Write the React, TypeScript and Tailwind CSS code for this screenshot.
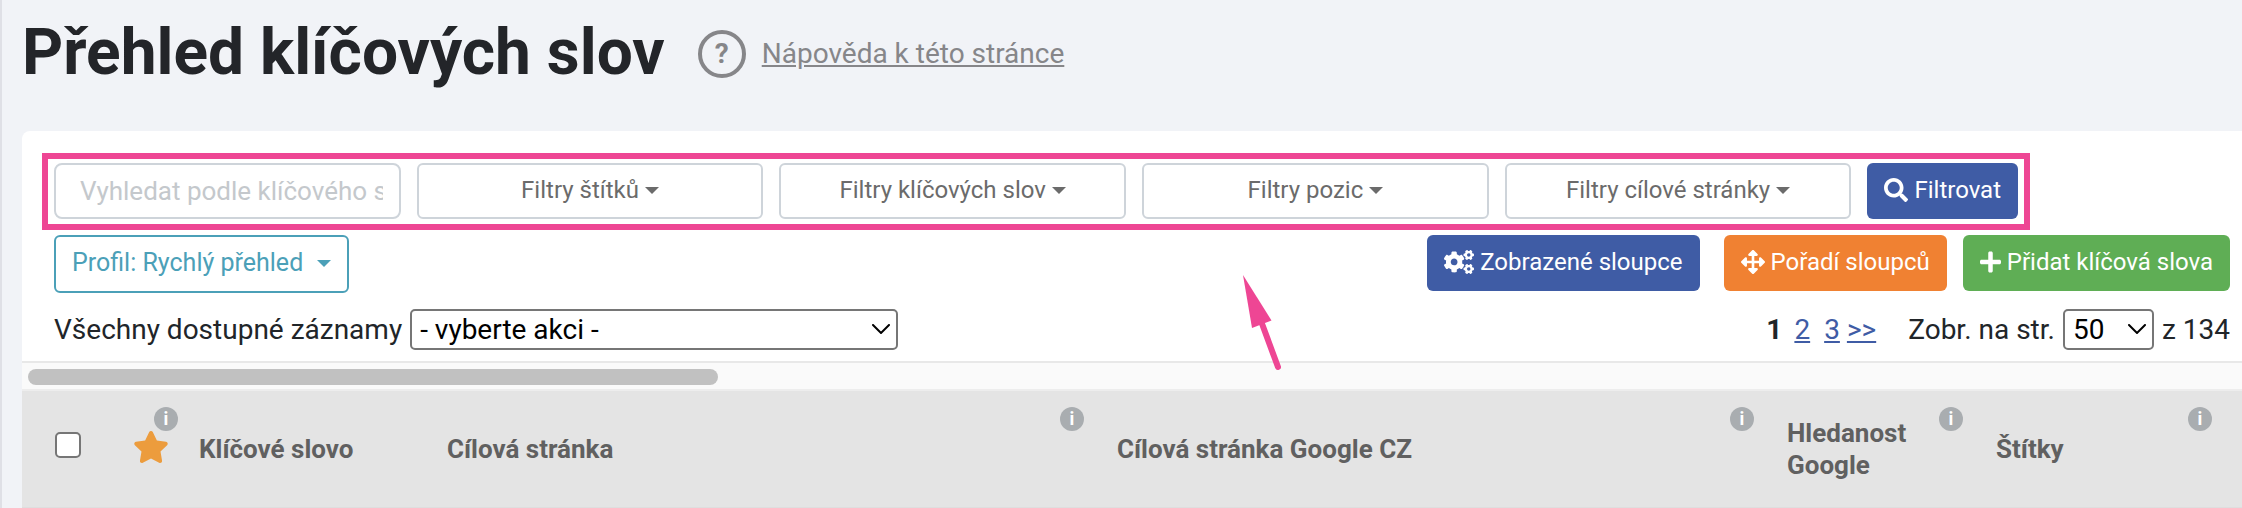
import { useState } from "react";
import { FaArrowsAlt, FaCogs, FaPlus, FaSearch, FaStar } from "react-icons/fa";

const filters = ["Filtry štítků", "Filtry klíčových slov", "Filtry pozic", "Filtry cílové stránky"];

type Column = {
  label: string;
  width: string;
  info: boolean;
};

const columns: Column[] = [
  { label: "Klíčové slovo", width: "w-[248px]", info: false },
  { label: "Cílová stránka", width: "w-[670px]", info: true },
  { label: "Cílová stránka Google CZ", width: "w-[670px]", info: true },
  { label: "Hledanost Google", width: "w-[209px]", info: true },
  { label: "Štítky", width: "w-[249px]", info: true },
];

function Caret() {
  return <span className="border-x-[7px] border-t-[7px] border-x-transparent border-t-current" />;
}

function InfoBadge() {
  return (
    <span className="absolute top-4 right-4 flex size-6 items-center justify-center rounded-full bg-[#a9adb0] text-[18px] leading-none font-bold text-white">
      i
    </span>
  );
}

type SelectProps = {
  label: string;
  value: string;
  options: string[];
  onChange: (value: string) => void;
  className: string;
};

function Select({ label, value, options, onChange, className }: SelectProps) {
  return (
    <span className={`relative inline-block ${className}`}>
      <select
        aria-label={label}
        value={value}
        onChange={(e) => onChange(e.target.value)}
        className="block h-[41px] w-full appearance-none rounded-[5px] border-2 border-[#767676] bg-white pr-8 pl-2 text-[28px] leading-[36px] text-black"
      >
        {options.map((option) => (
          <option key={option}>{option}</option>
        ))}
      </select>
      <svg
        viewBox="0 0 18 10"
        className="pointer-events-none absolute top-[15px] right-2 h-[10px] w-[18px]"
        fill="none"
        stroke="black"
        strokeWidth="2"
        strokeLinecap="round"
      >
        <path d="M1 1l8 8 8-8" />
      </svg>
    </span>
  );
}

export default function App() {
  const [query, setQuery] = useState("");
  const [action, setAction] = useState("- vyberte akci -");
  const [pageSize, setPageSize] = useState("50");

  return (
    <div className="min-h-screen overflow-hidden border-l-2 border-[#dfe0e6] bg-[#f1f3f7] pl-5 font-[Roboto,sans-serif] text-[#212529]">
      <header className="flex h-[131px] items-start gap-[33px] pt-[15px]">
        <h1 className="text-[64px] leading-[76px] font-bold text-[#232529]">Přehled klíčových slov</h1>
        <div className="flex items-center gap-4 pt-[15px] text-[28px] text-[#868689]">
          <span className="flex size-12 items-center justify-center rounded-full border-4 border-[#868689] leading-none font-bold">
            ?
          </span>
          <a href="#napoveda" className="underline">
            Nápověda k této stránce
          </a>
        </div>
      </header>

      <main className="relative rounded-tl-lg bg-white">
        <div className="pt-8 pr-3 pl-8">
          <form
            className="relative mr-[212px] grid grid-cols-[repeat(5,minmax(0,1fr))_auto] gap-4 text-[24px]"
            onSubmit={(e) => e.preventDefault()}
          >
            <input
              aria-label="Vyhledat podle klíčového slova"
              placeholder="Vyhledat podle klíčového slova"
              value={query}
              onChange={(e) => setQuery(e.target.value)}
              className="h-14 min-w-0 rounded-lg border-2 border-[#ced4da] pr-4 pl-6 text-[26px] placeholder:text-[#c4c8cc]"
            />
            {filters.map((filter) => (
              <button
                key={filter}
                type="button"
                className="flex h-14 items-center justify-center gap-[6px] rounded-md border-2 border-[#ced4da] pb-[2px] text-[#6b6b6b]"
              >
                {filter}
                <Caret />
              </button>
            ))}
            <button
              type="submit"
              className="flex h-14 items-center gap-[6px] rounded-md bg-[#3f5ca5] px-[17px] pb-[2px] text-white"
            >
              <FaSearch className="size-6" />
              Filtrovat
            </button>
            <div className="pointer-events-none absolute -inset-x-3 -top-[10px] -bottom-[11px] border-6 border-[#ee4694]" />
          </form>

          <div className="mt-4 flex items-start text-[24px] text-white">
            <button
              type="button"
              className="flex h-[58px] items-center gap-[14px] rounded-md border-2 border-[#4ba0b8] px-4 pb-[2px] text-[25px] text-[#4ba0b8]"
            >
              Profil: Rychlý přehled
              <Caret />
            </button>
            <button
              type="button"
              className="mr-6 ml-auto flex h-14 items-center gap-[6px] rounded-md bg-[#3f5ca5] px-[17px] pb-[2px]"
            >
              <FaCogs className="h-6 w-[30px]" />
              Zobrazené sloupce
            </button>
            <button
              type="button"
              className="mr-4 flex h-14 items-center gap-[6px] rounded-md bg-[#f08132] px-[17px] pb-[2px]"
            >
              <FaArrowsAlt className="size-6" />
              Pořadí sloupců
            </button>
            <button
              type="button"
              className="flex h-14 items-center gap-[6px] rounded-md bg-[#5fae55] px-[17px] pb-[2px]"
            >
              <FaPlus className="h-6 w-[21px]" />
              Přidat klíčová slova
            </button>
          </div>

          <div className="mt-4 flex items-center justify-between pb-[11px] text-[28px] leading-[41px]">
            <div className="flex items-center gap-2">
              <span>Všechny dostupné záznamy</span>
              <Select
                label="Hromadná akce"
                value={action}
                options={["- vyberte akci -"]}
                onChange={setAction}
                className="w-[488px]"
              />
            </div>
            <div className="flex items-center">
              <nav className="mr-8 flex text-[#3f5ca5]">
                <b className="mr-3 text-[#212529]">1</b>
                <a href="#2" className="mr-[14px] underline">
                  2
                </a>
                <a href="#3" className="mr-[7px] underline">
                  3
                </a>
                <a href="#dalsi" className="underline">
                  &gt;&gt;
                </a>
              </nav>
              <span className="mr-2">Zobr. na str.</span>
              <Select
                label="Počet na stránku"
                value={pageSize}
                options={["50", "100", "200"]}
                onChange={setPageSize}
                className="mr-2 w-[91px]"
              />
              <span>z 134</span>
            </div>
          </div>
        </div>

        <div className="h-[30px] border-y-2 border-t-[#e8e8e8] border-b-[#ededed] bg-[#fafafa] px-[6px] py-[6px]">
          <div className="h-4 w-5/16 rounded-full bg-[#c1c1c1]" />
        </div>

        <table className="w-full table-fixed border-b border-[#dedede] bg-[#e4e4e4] text-left text-[26px] leading-8 text-[#606060]">
          <thead>
            <tr className="h-[116px]">
              <th className="w-[90px] pb-2 pl-[33px]">
                <input
                  type="checkbox"
                  aria-label="Vybrat vše"
                  className="block size-[26px] appearance-none rounded-[5px] border-2 border-[#767676] bg-white"
                />
              </th>
              <th className="relative w-[70px] pb-1">
                <FaStar className="ml-[21px] h-8 w-9 text-[#ec9c3d]" />
                <span className="absolute inset-y-0 -right-3 left-0">
                  <InfoBadge />
                </span>
              </th>
              {columns.map((column) => (
                <th key={column.label} className={`relative pr-14 pl-[17px] ${column.width}`}>
                  {column.label}
                  {column.info && <InfoBadge />}
                </th>
              ))}
              <th />
            </tr>
          </thead>
        </table>

        <svg
          viewBox="0 0 40 96"
          className="pointer-events-none absolute top-[144px] left-[1221px] h-24 w-10"
          fill="#ee4694"
        >
          <path d="M0 0L28.500 45.500 9 53z" />
          <path d="M18 46L35 92" stroke="#ee4694" strokeWidth="6" strokeLinecap="round" />
        </svg>
      </main>
    </div>
  );
}
